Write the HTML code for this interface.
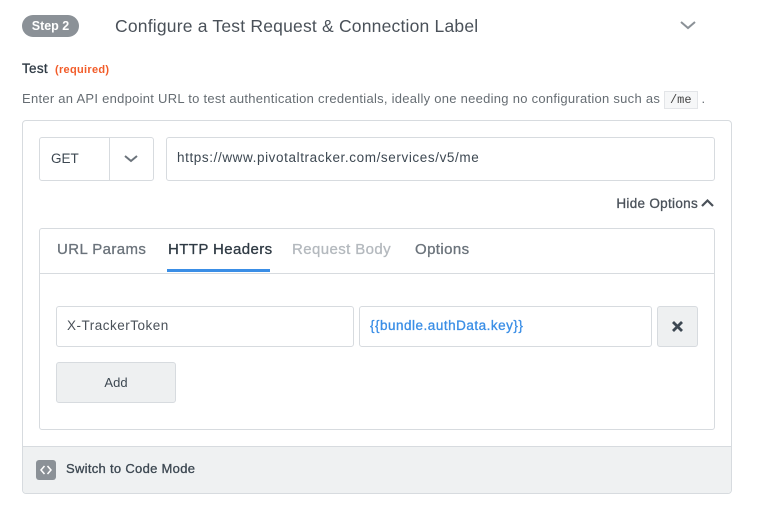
<!DOCTYPE html>
<html><head><meta charset="utf-8"><style>
*{box-sizing:border-box;margin:0;padding:0}
body{width:762px;height:515px;background:#fff;font-family:"Liberation Sans",Arial,sans-serif;position:relative;overflow:hidden;color:#3d4852}
.a{position:absolute;white-space:nowrap}
.pill{left:22px;top:15px;width:57px;height:22px;border-radius:11px;background:#8b9197;color:#fff;font-size:12.5px;font-weight:bold;text-align:center;line-height:22px}
.title{left:115px;top:14px;font-size:17.5px;color:#4a5159;line-height:24px;letter-spacing:0.2px}
.inp{border:1px solid #d7dbdf;border-radius:3px;background:#fff}
.tab{font-size:15px;letter-spacing:0.4px;-webkit-text-stroke:0.3px}
</style></head><body>
<div class="a pill">Step 2</div>
<div class="a title">Configure a Test Request &amp; Connection Label</div>
<svg class="a" style="left:679px;top:19px" width="18" height="12"><path d="M2 3 L9 9 L16 3" fill="none" stroke="#8b9197" stroke-width="2"/></svg>
<div class="a" style="left:22px;top:60px;font-size:13.5px;color:#2f3a44;line-height:18px;letter-spacing:0.3px;-webkit-text-stroke:0.3px">Test <span style="color:#f25c29;font-size:11px;font-weight:bold;margin-left:3px;-webkit-text-stroke:0">(required)</span></div>
<div class="a" style="left:22px;top:90px;font-size:13px;color:#666d73;line-height:18px;letter-spacing:0.27px">Enter an API endpoint URL to test authentication credentials, ideally one needing no configuration such as <span style="font-family:'Liberation Mono',monospace;font-size:12px;background:#f6f7f8;border:1px solid #e3e5e8;padding:1px 5px;color:#444;letter-spacing:0">/me</span> .</div>
<div class="a" style="left:22px;top:120px;width:710px;height:374px;border:1px solid #d7dbdf;border-radius:4px;overflow:hidden">
  <div class="a" style="left:0;top:325px;width:708px;height:48px;background:#eff1f2;border-top:1px solid #d7dbdf"></div>
</div>
<div class="a inp" style="left:39px;top:137px;width:115px;height:44px"></div>
<div class="a" style="left:109px;top:137px;width:1px;height:44px;background:#d7dbdf"></div>
<div class="a" style="left:51px;top:151px;font-size:13.5px;color:#3d4852">GET</div>
<svg class="a" style="left:122px;top:153px" width="18" height="12"><path d="M3 3 L9 8 L15 3" fill="none" stroke="#6b737b" stroke-width="2"/></svg>
<div class="a inp" style="left:166px;top:137px;width:549px;height:44px"></div>
<div class="a" style="left:177px;top:150px;font-size:13.5px;color:#3d4852;letter-spacing:0.6px">https://www.pivotaltracker.com/services/v5/me</div>
<div class="a" style="left:600px;width:98px;text-align:right;top:196px;font-size:13.5px;color:#4a5159;letter-spacing:0.3px;-webkit-text-stroke:0.3px">Hide Options</div>
<svg class="a" style="left:700px;top:197px" width="15" height="12"><path d="M2 9 L7.5 3.5 L13 9" fill="none" stroke="#4a5159" stroke-width="2.2"/></svg>
<div class="a" style="left:39px;top:228px;width:676px;height:202px;border:1px solid #d7dbdf;border-radius:3px"></div>
<div class="a" style="left:40px;top:273px;width:674px;height:1px;background:#d7dbdf"></div>
<div class="a tab" style="left:57px;top:241px;color:#6b737b">URL Params</div>
<div class="a tab" style="left:168px;top:241px;color:#2f3a44">HTTP Headers</div>
<div class="a" style="left:167px;top:269px;width:103px;height:3px;background:#3a8ee6"></div>
<div class="a tab" style="left:292px;top:241px;color:#b4b9be">Request Body</div>
<div class="a tab" style="left:415px;top:241px;color:#6b737b">Options</div>
<div class="a inp" style="left:56px;top:306px;width:298px;height:41px"></div>
<div class="a" style="left:67px;top:318px;font-size:13.5px;color:#4a5159;letter-spacing:0.5px">X-TrackerToken</div>
<div class="a inp" style="left:359px;top:306px;width:293px;height:41px"></div>
<div class="a" style="left:370px;top:318px;font-size:13.5px;color:#3a8ee6;letter-spacing:0.5px;-webkit-text-stroke:0.3px">{{bundle.authData.key}}</div>
<div class="a" style="left:657px;top:306px;width:41px;height:41px;background:#eef0f1;border:1px solid #d7dbdf;border-radius:3px"></div>
<svg class="a" style="left:671px;top:320px" width="13" height="13"><path d="M2 2 L11 11 M11 2 L2 11" stroke="#3d4852" stroke-width="2.8"/></svg>
<div class="a" style="left:56px;top:362px;width:120px;height:41px;background:#eef0f1;border:1px solid #d7dbdf;border-radius:3px;font-size:13px;color:#3d4852;text-align:center;line-height:39px">Add</div>
<div class="a" style="left:36px;top:460px;width:20px;height:20px;background:#8b9197;border-radius:3px"></div>
<svg class="a" style="left:36px;top:460px" width="20" height="20"><path d="M8.5 6 L5 10 L8.5 14 M11.5 6 L15 10 L11.5 14" fill="none" stroke="#fff" stroke-width="1.5"/></svg>
<div class="a" style="left:66px;top:461px;font-size:13px;color:#3d4852;letter-spacing:0.3px;-webkit-text-stroke:0.3px">Switch to Code Mode</div>
</body></html>
